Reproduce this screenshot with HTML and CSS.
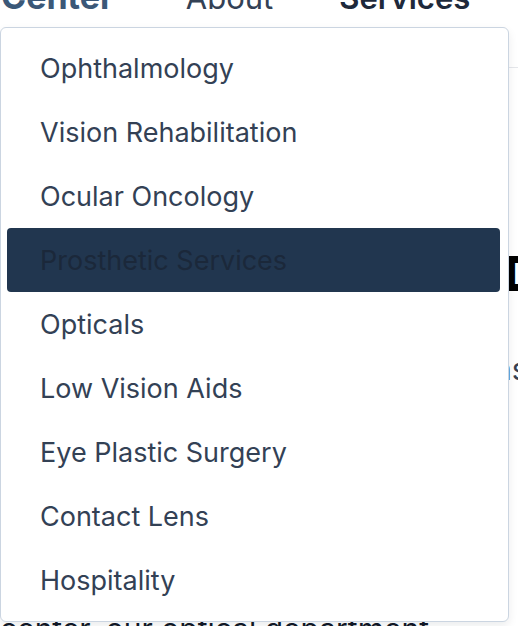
FILE: index.html
```html
<!DOCTYPE html>
<html lang="en">
<head>
<meta charset="utf-8">
<title>Services</title>
<link rel="stylesheet" href="styles.css">
</head>
<body>
<div class="page">
  <header class="site-header">
    <div class="nav-row">
      <span class="brand">Center</span>
      <nav class="nav-links">
        <span class="nav-link">About</span>
        <span class="nav-link nav-link-active">Services</span>
      </nav>
    </div>
  </header>
  <main class="content">
    <h1 class="title"><span class="title-pad">Our Services at the Eye</span>Department</h1>
    <p class="lead"><span class="title-pad lead-pad">Comprehensive care for all eye condit</span>ns</p>
    <p class="body-text">center, our optical department</p>
  </main>
  <div class="dropdown">
    <ul class="menu">
      <li class="menu-item">Ophthalmology</li>
      <li class="menu-item">Vision Rehabilitation</li>
      <li class="menu-item">Ocular Oncology</li>
      <li class="menu-item menu-item-hover">Prosthetic Services</li>
      <li class="menu-item">Opticals</li>
      <li class="menu-item">Low Vision Aids</li>
      <li class="menu-item">Eye Plastic Surgery</li>
      <li class="menu-item">Contact Lens</li>
      <li class="menu-item">Hospitality</li>
    </ul>
  </div>
</div>
</body>
</html>
```

FILE: styles.css
```css
* { box-sizing: border-box; }
html, body {
  margin: 0;
  padding: 0;
  background: #ffffff;
  overflow: hidden;
}
body {
  font-family: Inter, "Noto Sans", "Liberation Sans", sans-serif;
  color: #334155;
}
.page {
  position: relative;
  width: 518px;
  height: 626px;
  overflow: hidden;
}
.site-header {
  display: flow-root;
  height: 68px;
  border-bottom: 1px solid #e5e7eb;
}
.nav-row {
  display: flex;
  align-items: baseline;
  margin-top: -19px;
  height: 31px;
  white-space: nowrap;
}
.brand {
  font-size: 34px;
  line-height: 31px;
  font-weight: 700;
  color: #3b5878;
  margin-left: 1px;
}
.nav-links {
  display: flex;
  gap: 66px;
  margin-left: 72px;
}
.nav-link {
  font-size: 31px;
  line-height: 31px;
  color: #334155;
}
.nav-link-active {
  font-weight: 600;
  color: #1e293b;
}
.content {
  padding-top: 178px;
  white-space: nowrap;
}
.title {
  margin: 0;
  font-size: 48px;
  line-height: 56px;
  font-weight: 800;
  color: #000000;
}
.title-pad {
  display: inline-block;
  width: 504px;
  overflow: hidden;
  vertical-align: bottom;
}
.lead {
  margin: 49px 0 0;
  font-size: 30px;
  line-height: 36px;
  color: #374151;
}
.lead-pad {
  width: 494px;
}
.body-text {
  margin: 224px 0 0;
  font-size: 30px;
  line-height: 36px;
  color: #111827;
}
.dropdown {
  position: absolute;
  left: 0;
  top: 27px;
  width: 509px;
  height: 595px;
  background: #ffffff;
  border: 1px solid #cbd5e1;
  border-radius: 6px;
  box-shadow: 0 4px 10px rgba(15, 23, 42, 0.08);
  padding: 8px 8px 8px 6px;
}
.menu {
  list-style: none;
  margin: 0;
  padding: 0;
  display: flex;
  flex-direction: column;
}
.menu-item {
  height: 64px;
  display: flex;
  align-items: center;
  padding-left: 33px;
  font-size: 27px;
  color: #334155;
  border-radius: 4px;
  white-space: nowrap;
}
.menu-item-hover {
  background: #21364f;
  color: #1b283a;
}
```
